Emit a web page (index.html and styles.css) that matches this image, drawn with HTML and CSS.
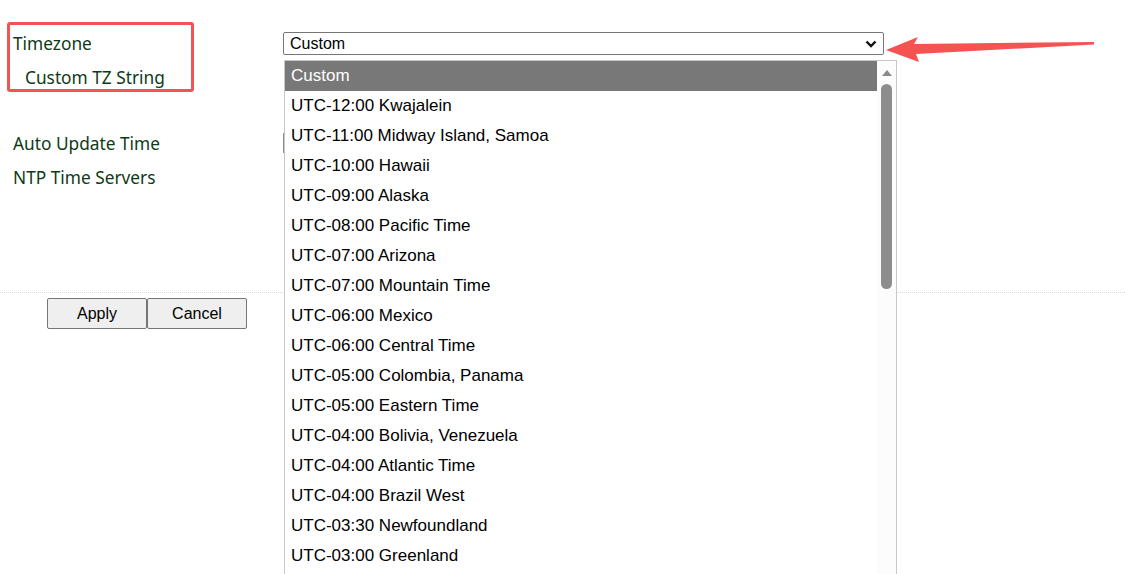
FILE: index.html
```html
<!DOCTYPE html>
<html>
<head>
<meta charset="utf-8">
<link rel="stylesheet" href="styles.css">
</head>
<body>
<div class="page">
  <div class="form">
    <div class="row r1">
      <label class="lbl">Timezone</label>
      <div class="ctl">
        <div class="select"><span>Custom</span>
          <svg class="chev" width="12" height="8" viewBox="0 0 12 8"><path d="M1.5 1.5 L6 6 L10.5 1.5" fill="none" stroke="#111" stroke-width="2.4"/></svg>
        </div>
      </div>
    </div>
    <div class="row r2"><label class="lbl sub">Custom TZ String</label></div>
    <div class="row r3"><label class="lbl">Auto Update Time</label><div class="ctl"><span class="stub"></span></div></div>
    <div class="row r4"><label class="lbl">NTP Time Servers</label></div>
  </div>
  <div class="sep"></div>
  <div class="buttons"><button class="btn">Apply</button><button class="btn">Cancel</button></div>

  <div class="listbox">
    <ul class="opts">
      <li class="sel">Custom</li>
      <li>UTC-12:00 Kwajalein</li>
      <li>UTC-11:00 Midway Island, Samoa</li>
      <li>UTC-10:00 Hawaii</li>
      <li>UTC-09:00 Alaska</li>
      <li>UTC-08:00 Pacific Time</li>
      <li>UTC-07:00 Arizona</li>
      <li>UTC-07:00 Mountain Time</li>
      <li>UTC-06:00 Mexico</li>
      <li>UTC-06:00 Central Time</li>
      <li>UTC-05:00 Colombia, Panama</li>
      <li>UTC-05:00 Eastern Time</li>
      <li>UTC-04:00 Bolivia, Venezuela</li>
      <li>UTC-04:00 Atlantic Time</li>
      <li>UTC-04:00 Brazil West</li>
      <li>UTC-03:30 Newfoundland</li>
      <li>UTC-03:00 Greenland</li>
    </ul>
    <div class="sbar">
      <svg class="up" width="10" height="6" viewBox="0 0 10 6"><path d="M0 6 L5 0 L10 6 Z" fill="#8a8a8a"/></svg>
      <div class="thumb"></div>
    </div>
  </div>

  <div class="annot-box"></div>
  <svg class="arrow" width="220" height="40" viewBox="0 0 220 40">
    <polygon points="1,16 33,3 29,10 209,8 209,10.5 31,20 34,28" fill="#f55252"/>
  </svg>
</div>
</body>
</html>
```
FILE: styles.css
```css
html, body {
  margin: 0;
  padding: 0;
  background: #fff;
}
.page {
  position: relative;
  width: 1125px;
  height: 574px;
  overflow: hidden;
}
.form {
  padding-top: 27px;
}
.row {
  display: flex;
  align-items: center;
}
.lbl {
  width: 283px;
  flex: none;
  box-sizing: border-box;
  padding-left: 13px;
  font-family: "Noto Sans", sans-serif;
  font-size: 17.3px;
  color: #0e3a17;
}
.lbl.sub {
  padding-left: 25px;
}
.r1 { height: 33px; }
.r2 { height: 34px; }
.r3 { height: 34px; margin-top: 32px; }
.r4 { height: 34px; }
.ctl {
  display: flex;
  align-items: center;
}
.select {
  width: 601px;
  height: 23px;
  box-sizing: border-box;
  border: 1px solid #767676;
  border-radius: 2px;
  display: flex;
  align-items: center;
  justify-content: space-between;
  padding: 0 6px 0 6px;
  font-family: "Liberation Sans", Arial, sans-serif;
  font-size: 16px;
  color: #000;
  background: #fff;
}
.chev { display: block; }
.stub {
  display: block;
  width: 2px;
  height: 20px;
  background: #8a8a8a;
}
.sep {
  margin-top: 98px;
  border-top: 1px dotted #d8d8d8;
}
.buttons {
  display: flex;
  padding-left: 47px;
  margin-top: 5px;
}
.btn {
  width: 100px;
  height: 31px;
  box-sizing: border-box;
  background: #efefef;
  border: 1px solid #767676;
  border-radius: 2px;
  font-family: "Liberation Sans", Arial, sans-serif;
  font-size: 16px;
  color: #000;
  padding: 0;
}
.listbox {
  position: absolute;
  left: 284px;
  top: 60px;
  width: 613px;
  height: 560px;
  box-sizing: border-box;
  border: 1px solid #c8c8c8;
  background: #fff;
  display: flex;
}
.opts {
  list-style: none;
  margin: 0;
  padding: 0;
  flex: 1;
  font-family: "Liberation Sans", Arial, sans-serif;
  font-size: 17px;
  color: #000;
}
.opts li {
  height: 30px;
  line-height: 30px;
  padding-left: 6px;
}
.opts li.sel {
  background: #787878;
  color: #fff;
}
.sbar {
  width: 19px;
  flex: none;
  background: #fcfcfc;
  display: flex;
  flex-direction: column;
  align-items: center;
}
.up {
  display: block;
  margin-top: 9px;
}
.thumb {
  width: 11px;
  height: 205px;
  margin-top: 8px;
  border-radius: 6px;
  background: #8d8d8d;
}
.annot-box {
  position: absolute;
  left: 7px;
  top: 22px;
  width: 187px;
  height: 70px;
  box-sizing: border-box;
  border: 3px solid #f55252;
  border-radius: 3px;
}
.arrow {
  position: absolute;
  left: 885px;
  top: 34px;
}
```
